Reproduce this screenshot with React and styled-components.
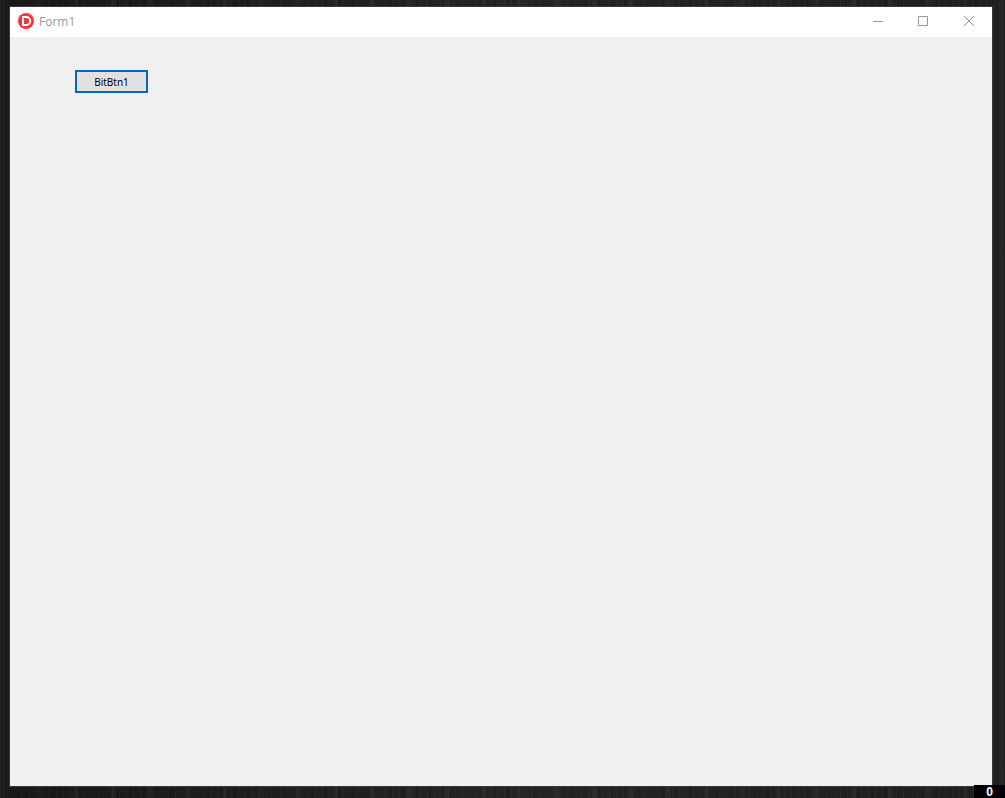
import React from "react";
import styled, { createGlobalStyle } from "styled-components";

const GlobalStyle = createGlobalStyle`
  * {
    box-sizing: border-box;
  }
  body {
    margin: 0;
    background-color: #181818;
  }
`;

const Desktop = styled.div`
  position: relative;
  display: flex;
  min-height: 100vh;
  padding: 6px 12px 11px 9px;
  background-color: #181818;
  background-image:
    repeating-linear-gradient(90deg, rgba(255, 255, 255, 0.03) 0 1px, transparent 1px 7px),
    repeating-linear-gradient(90deg, rgba(0, 0, 0, 0.12) 0 2px, transparent 2px 13px),
    repeating-linear-gradient(90deg, rgba(255, 255, 255, 0.03) 0 5px, transparent 5px 37px),
    linear-gradient(90deg, transparent, rgba(255, 255, 255, 0.05) 50%, rgba(255, 255, 255, 0.03));
`;
const Window = styled.main`
  display: flex;
  flex-direction: column;
  flex: 1;
  border: 1px solid #383a39;
  background-color: #f0f0f0;
`;
const TitleBar = styled.header`
  display: flex;
  align-items: center;
  height: 30px;
  padding: 0 0 2px 8px;
  background-color: #fff;
`;
const Title = styled.h1`
  flex: 1;
  margin: 0 0 0 5px;
  padding-top: 2px;
  font-family: "Open Sans", "Noto Sans", sans-serif;
  font-size: 12px;
  line-height: 16px;
  font-weight: 400;
  color: #999;
`;
const Controls = styled.div`
  display: flex;
  height: 100%;
`;
const ControlButton = styled.button`
  display: flex;
  align-items: center;
  justify-content: center;
  width: 46px;
  padding: 0;
  border: none;
  background-color: transparent;
  color: #999;
`;
const Form = styled.section`
  flex: 1;
  padding: 33px 65px;
`;
const BitButton = styled.button`
  display: flex;
  align-items: center;
  justify-content: center;
  width: 73px;
  height: 23px;
  padding: 0;
  border: 2px solid ${(props) => (props.$focused ? "#0066cc" : "#adadad")};
  background-color: #e1e1e1;
  font-family: "Noto Sans", sans-serif;
  font-size: 10px;
  line-height: 14px;
  color: #000;
`;
const Counter = styled.div`
  position: absolute;
  right: 0;
  bottom: 0;
  width: 31px;
  height: 13px;
  background-color: #000;
  font-family: "Liberation Sans", Arial, sans-serif;
  font-size: 12px;
  line-height: 14px;
  font-weight: 700;
  text-align: center;
  color: #fff;
`;

const AppLogo = () => (
  <svg width="16" height="16" viewBox="0 0 16 16" aria-hidden="true">
    <circle cx="8" cy="8" r="8" fill="#ff3232" />
    <path
      d="M4 3h4.2a5 5 0 0 1 0 10H4zM6 5v6h2.2a3 3 0 0 0 0-6z"
      fill="#fff"
      fillRule="evenodd"
    />
  </svg>
);

const ControlIcon = ({ d }) => (
  <svg width="12" height="12" viewBox="0 0 12 12" fill="none" stroke="currentColor" aria-hidden="true">
    <path d={d} />
  </svg>
);

const controls = [
  { label: "Minimize", d: "M2 6.5h10" },
  { label: "Maximize", d: "M1.5 1.5h9v9h-9z" },
  { label: "Close", d: "M1 1l10 10M11 1L1 11" },
];

const App = () => {
  return (
    <Desktop>
      <GlobalStyle />
      <Window>
        <TitleBar>
          <AppLogo />
          <Title>Form1</Title>
          <Controls>
            {controls.map((control) => (
              <ControlButton key={control.label} type="button" aria-label={control.label}>
                <ControlIcon d={control.d} />
              </ControlButton>
            ))}
          </Controls>
        </TitleBar>
        <Form>
          <BitButton type="button" $focused>BitBtn1</BitButton>
        </Form>
      </Window>
      <Counter>0</Counter>
    </Desktop>
  );
};

export default App;
